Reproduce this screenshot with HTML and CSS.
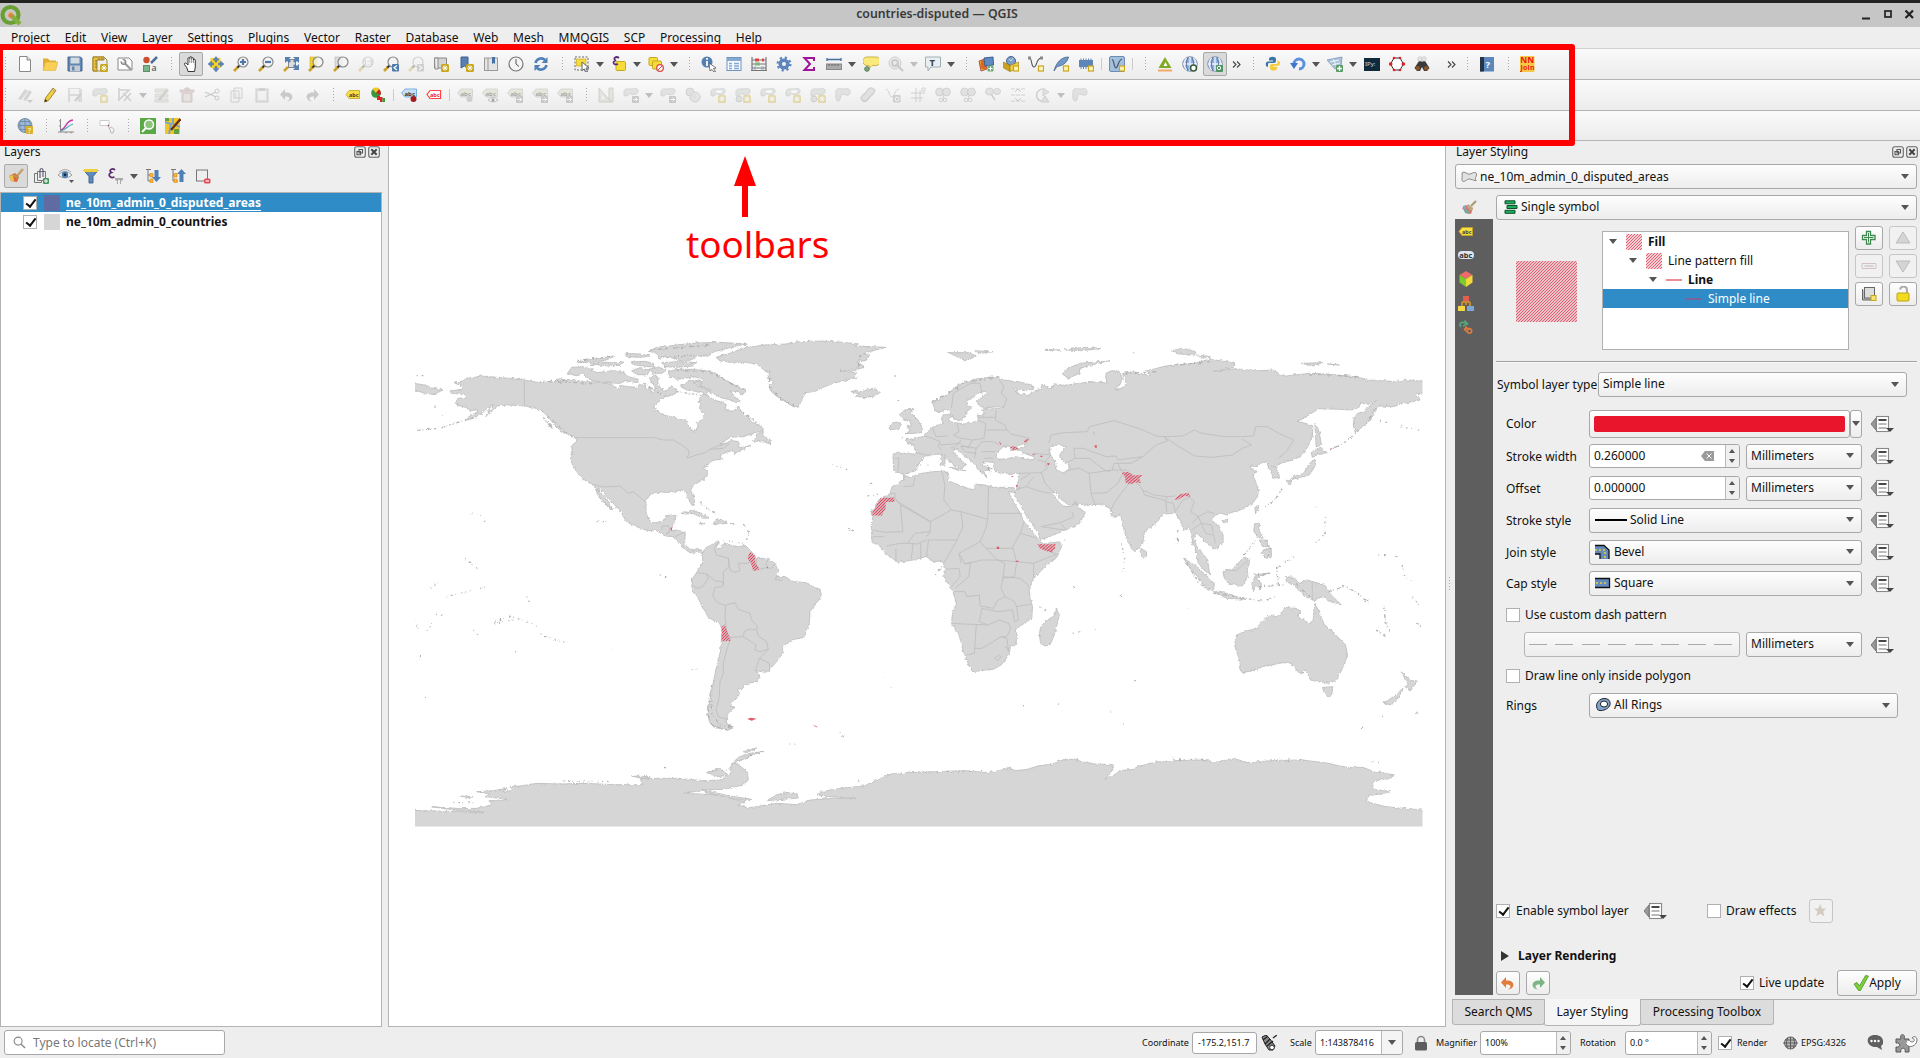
FILE: index.html
```html
<!DOCTYPE html>
<html lang="en">
<head>
<meta charset="utf-8">
<title>countries-disputed — QGIS</title>
<link rel="stylesheet" href="styles.css">
</head>
<body>
<svg class="defs" aria-hidden="true">
<defs>
<filter id="coast" x="-2%" y="-2%" width="104%" height="104%" color-interpolation-filters="sRGB"><feTurbulence type="fractalNoise" baseFrequency=".3" numOctaves="2" seed="4"/><feDisplacementMap in="SourceGraphic" scale="3.500" xChannelSelector="R" yChannelSelector="G"/></filter>
<clipPath id="extent"><rect x="415" y="330" width="1007.500" height="496.500"/></clipPath>
<pattern id="hatch" width="3" height="3" patternUnits="userSpaceOnUse"><path d="M-1 1L1-1M0 3L3 0M2 4L4 2" stroke="#e15a6c" stroke-width="1.15"/></pattern>
<pattern id="hatchA" width="9" height="9" patternUnits="userSpaceOnUse"><path d="M-2 2L2-2M0 9L9 0M7 11L11 7" stroke="#e0435a" stroke-width="3.4"/></pattern>
<symbol id="caret" viewBox="0 0 8 5"><path d="M0 0H8L4 5Z" fill="#555"/></symbol>
<symbol id="star" viewBox="0 0 8 8"><rect width="8" height="8" rx="1.500" fill="#c9a71c"/><path d="M4 1.200V6.800M1.200 4H6.800M2 2L6 6M6 2L2 6" stroke="#fff" stroke-width=".9"/></symbol>
<symbol id="lens" viewBox="0 0 16 16"><path d="M1 15L5.500 10.500" stroke="#c9a227" stroke-width="2.600"/><path d="M4.500 11.500L6.500 9.500" stroke="#333" stroke-width="2"/><circle cx="10" cy="6" r="5" fill="#f4f4f4" fill-opacity=".8" stroke="#888" stroke-width="1.200"/></symbol>
<symbol id="blob" viewBox="0 0 16 16"><path d="M1 5C1 1 5 2 8 2S15 0 15 4 11 8 8 7 6 9 3 9 1 7 1 5Z" fill="#b9beb9" stroke="#8c918c"/></symbol>
<symbol id="new" viewBox="0 0 16 16"><path d="M2.500.5H10L13.500 4V15.500H2.500Z" fill="#fff" stroke="#888"/><path d="M10 .5V4H13.500" fill="#ddd" stroke="#888"/></symbol>
<symbol id="open" viewBox="0 0 16 16"><path d="M1 14V2.500H6L7.500 4.500H14V7" fill="#e0ad2e"/><path d="M1 14.500L3.500 6H16L13.500 14.500Z" fill="#f9cf57" stroke="#e3b13a" stroke-width=".6"/></symbol>
<symbol id="save" viewBox="0 0 16 16"><path d="M1 1H13.500L15 2.500V15H1Z" fill="#5f86b5" stroke="#48668c"/><rect x="3.500" y="1.500" width="9" height="6" fill="#d5dbe2"/><rect x="3" y="9.500" width="10" height="5.500" fill="#c5cbd1"/><rect x="5" y="10.500" width="2.500" height="4" fill="#5f86b5"/></symbol>
<symbol id="layout" viewBox="0 0 16 16"><path d="M1 1H12L15 4V15H1Z" fill="#eee" stroke="#9a8a4a"/><path d="M1 1H12V4H5V15H1Z" fill="#e9bf3b" stroke="#a2832b"/><path d="M3 5H5M3 8H5M3 11H5M7 2V4M10 2V4" stroke="#775"/><use href="#star" x="8" y="8" width="8" height="8"/></symbol>
<symbol id="layouts" viewBox="0 0 16 16"><path d="M1 2H12L15 5V14H1Z" fill="#fff" stroke="#888"/><path d="M7 6.500L14 13.500" stroke="#999" stroke-width="2.200"/><circle cx="6.500" cy="6" r="2.500" fill="#bbb" stroke="#777"/><path d="M4 3.500L6.500 6" stroke="#fff" stroke-width="2"/></symbol>
<symbol id="style" viewBox="0 0 16 16"><circle cx="4.500" cy="4" r="3.200" fill="#c94f2f"/><path d="M9 7L15 1" stroke="#4a6f9c" stroke-width="2.500"/><rect x="1.500" y="9.500" width="6" height="6" fill="#7cb38a" stroke="#5b9169"/><text x="9.500" y="15" font-size="9" fill="#444">a</text></symbol>
<symbol id="hand" viewBox="0 0 16 16"><path d="M5 15.500L4 12 1.500 8.500C1 7 2.500 6.500 3.500 7.500L5 9V2.500C5 1.300 6.800 1.300 6.800 2.500V1.500C6.800.3 8.700.3 8.700 1.500V2.500C8.700 1.300 10.500 1.500 10.500 2.500V4C10.500 3 12.300 3 12.300 4V11L11.500 15.500Z" fill="#fff" stroke="#222" stroke-width=".9"/><path d="M6.800 2.500V7M8.700 2.500V7M10.500 4V7" stroke="#444" stroke-width=".6"/></symbol>
<symbol id="pansel" viewBox="0 0 16 16"><rect x="2.500" y="2" width="10" height="10" fill="#f2d22f"/><g fill="#5e88b8" stroke="#41618a" stroke-width=".4"><path d="M8 .5L11 4H9V6H7V4H5ZM8 16L11 12.500H9V10.500H7V12.500H5ZM0 8L3.500 5V7H5.500V9H3.500V11ZM16 8L12.500 5V7H10.500V9H12.500V11Z"/></g></symbol>
<symbol id="zin" viewBox="0 0 16 16"><use href="#lens"/><path d="M10 3V9M7 6H13" stroke="#4f78ab" stroke-width="2.200"/></symbol>
<symbol id="zout" viewBox="0 0 16 16"><use href="#lens"/><path d="M7 6H13" stroke="#4f78ab" stroke-width="2.200"/></symbol>
<symbol id="zfull" viewBox="0 0 16 16"><path d="M1 15L5 11" stroke="#c9a227" stroke-width="2.500"/><rect x="5.500" y="3.500" width="7" height="8" fill="#ddd" stroke="#888"/><path d="M2 1H8L6 3 8 5 6 7 4 5 2 7ZM16 1H10L12 3 10 5 12 7 14 5 16 7ZM16 14H10L12 12 10 10 12 8 14 10 16 8Z" fill="#5580b0"/></symbol>
<symbol id="zsel" viewBox="0 0 16 16"><rect x="2" y="1" width="7" height="10" fill="#f2d22f" stroke="#c8a818" stroke-width=".5"/><use href="#lens"/></symbol>
<symbol id="zlay" viewBox="0 0 16 16"><rect x="2" y="1" width="7" height="10" fill="#ddd" stroke="#aaa" stroke-width=".5"/><use href="#lens"/></symbol>
<symbol id="znat" viewBox="0 0 16 16"><use href="#lens"/><text x="5.500" y="8.500" font-size="6.500" fill="#555">1:1</text></symbol>
<symbol id="zlast" viewBox="0 0 16 16"><use href="#lens"/><rect x="9" y="8" width="7" height="7.500" rx="1" fill="#507aac"/><path d="M14 9.500L11 11.700 14 14" stroke="#fff" fill="none" stroke-width="1.200"/></symbol>
<symbol id="znext" viewBox="0 0 16 16"><use href="#lens"/><rect x="9" y="8" width="7" height="7.500" rx="1" fill="#888"/><path d="M11 9.500L14 11.700 11 14" stroke="#fff" fill="none" stroke-width="1.200"/></symbol>
<symbol id="nmap" viewBox="0 0 16 16"><path d="M1.500 2H13.500V12H1.500Z" fill="#d5d5d5" stroke="#888"/><path d="M1.500 2H5V13H2Z" fill="#eee" stroke="#888"/><use href="#star" x="8" y="8" width="8" height="8"/></symbol>
<symbol id="nbook" viewBox="0 0 16 16"><path d="M3 1H10V13L6.500 10 3 12Z" fill="#5680b3" stroke="#3f6390"/><use href="#star" x="8" y="8" width="8" height="8"/></symbol>
<symbol id="book" viewBox="0 0 16 16"><rect x="1.500" y="2" width="13" height="12.500" fill="#e4e4e4" stroke="#999"/><path d="M5 2V14.500" stroke="#999"/><path d="M9 1H12V8L10.500 7 9 8Z" fill="#4772a8"/></symbol>
<symbol id="clock" viewBox="0 0 16 16"><circle cx="8" cy="8" r="7" fill="#f5f5f5" stroke="#777" stroke-width="1.200"/><path d="M8 3V8L11 10.500" stroke="#555" fill="none"/></symbol>
<symbol id="refresh" viewBox="0 0 16 16"><path d="M2.500 7A5.700 5.700 0 0 1 12 4M13.500 9A5.700 5.700 0 0 1 4 12" stroke="#4f80b8" stroke-width="2.600" fill="none"/><path d="M14.500 1V7H8.500ZM1.500 15V9H7.500Z" fill="#4f80b8"/></symbol>
<symbol id="sel" viewBox="0 0 16 16"><rect x="1" y="1" width="13" height="13" fill="none" stroke="#666" stroke-dasharray="2 1.500"/><path d="M2.500 3H12V10H2.500Z" fill="#f6dc3b" stroke="#c9a91c" stroke-width=".7"/><path d="M8 6L15 12 12 12 13.500 15.500 11.500 16 10.500 13 8 14.500Z" fill="#fff" stroke="#444" stroke-width=".8"/></symbol>
<symbol id="eps" viewBox="0 0 16 16"><rect x="5" y="5.500" width="9.500" height="9" rx="1" fill="#f6dc3b" stroke="#c9a91c"/><path d="M8 2C5-.5 1 3 5 4.500 1 5 2 10 7 8" fill="none" stroke="#5c2c70" stroke-width="1.700"/></symbol>
<symbol id="desel" viewBox="0 0 16 16"><rect x="1" y="1.500" width="8.500" height="8" rx="1" fill="#f6dc3b" stroke="#c9a91c"/><rect x="4.500" y="5" width="9" height="8" rx="1" fill="#f6dc3b" stroke="#c9a91c"/><circle cx="12" cy="12" r="3.300" fill="#fff" stroke="#d84a4a" stroke-width="1.300"/><path d="M9.700 14.300L14.300 9.700" stroke="#d84a4a"/></symbol>
<symbol id="ident" viewBox="0 0 16 16"><circle cx="6" cy="6" r="5.500" fill="#557fb3"/><path d="M6 2V3.700M6 5V10" stroke="#fff" stroke-width="1.800"/><path d="M8 7L15 12 12.500 12.500 14.500 15.500 13 16 11 13.500 9 15Z" fill="#fff" stroke="#555" stroke-width=".8"/></symbol>
<symbol id="table" viewBox="0 0 16 16"><rect x="1" y="1.500" width="14" height="13" fill="#f5f9fd" stroke="#6f94c0"/><path d="M1 2H15V5H1Z" fill="#86a9d1"/><path d="M3 7.500H6M3 10H6M3 12.500H6M8 7.500H13M8 10H13M8 12.500H13" stroke="#86a9d1" stroke-width="1.300"/></symbol>
<symbol id="abacus" viewBox="0 0 16 16"><path d="M1 1V15M15 15V1M1 4H15M1 8H15M1 12H15M0 14.500H16" stroke="#777" fill="none" stroke-width="1.200"/><path d="M4 4H8" stroke="#d44" stroke-width="3"/><path d="M11 4H13" stroke="#d44" stroke-width="3"/><path d="M4 8H9" stroke="#7b7" stroke-width="3"/><path d="M3 12H5M10 12H13" stroke="#9ab" stroke-width="3"/></symbol>
<symbol id="gear" viewBox="0 0 16 16"><circle cx="8" cy="8" r="6.300" fill="none" stroke="#5c86bb" stroke-width="2.400" stroke-dasharray="2.200 2.748"/><circle cx="8" cy="8" r="3.800" fill="none" stroke="#5c86bb" stroke-width="3.500"/></symbol>
<symbol id="sigma" viewBox="0 0 16 16"><path d="M13 5V2H3.500L9 8 3.500 14H13V11" fill="none" stroke="#a0129a" stroke-width="2"/></symbol>
<symbol id="ruler" viewBox="0 0 16 16"><path d="M1 3.500H15M1 2V5M15 2V5" stroke="#44709f" stroke-width="1.300"/><rect x=".5" y="8" width="15" height="5.500" fill="#aaa" stroke="#888"/><path d="M3 8V10M6 8V10M9 8V10M12 8V10" stroke="#666"/></symbol>
<symbol id="tip" viewBox="0 0 16 16"><path d="M4 1H13A3.500 3.500 0 0 1 13 9.500H9L6 12.500 6 9.500H4A3.500 3.500 0 0 1 4 1Z" fill="#f9ea7b" stroke="#c9b34a"/><circle cx="4" cy="13" r="2.300" fill="#7aa87c" stroke="#557c57"/></symbol>
<symbol id="loc" viewBox="0 0 16 16"><circle cx="7" cy="7" r="6" fill="#ddd" stroke="#777"/><circle cx="7" cy="7" r="3" fill="none" stroke="#777" stroke-width="2"/><path d="M8 8L15 15" stroke="#777" stroke-width="2"/></symbol>
<symbol id="txt" viewBox="0 0 16 16"><path d="M.5 1H15.500V11H6L3 15V11H.5Z" fill="#e9eef0" stroke="#9fb0b5"/><text x="4.500" y="9.500" font-size="9.500" font-weight="700" fill="#444" font-family="Liberation Serif,serif">T</text></symbol>
<symbol id="dsm" viewBox="0 0 16 16"><path d="M1 5L7 3 9 13 3 15Z" fill="#f2b51f" stroke="#a55"/><path d="M3 4H9L8 14 2 12Z" fill="#d8692b"/><path d="M6 2L15 1 15.500 9 7 10Z" fill="#5f8bc4" stroke="#3b5e8f"/><rect x="9.500" y="9.500" width="6" height="6" rx="1" fill="#6fae78"/><path d="M12.500 10.500V14.500M10.500 12.500H14.500" stroke="#fff"/></symbol>
<symbol id="gpkg" viewBox="0 0 16 16"><circle cx="8" cy="5" r="4.500" fill="#7c9fc8" stroke="#44648c"/><path d="M6 3L8 5 10 2" stroke="#cde" fill="none"/><path d="M.5 6L7 9.500V15.500L.5 12Z" fill="#caa21f" stroke="#99791a" stroke-width=".6"/><path d="M7 9.500L15.500 6V12L7 15.500Z" fill="#f0cf3f" stroke="#99791a" stroke-width=".6"/><use href="#nb"/></symbol>
<symbol id="nb" viewBox="0 0 16 16"><rect x="10.500" y="10" width="5" height="5" fill="#fff5b8" stroke="#caa51d" stroke-width="1.200"/></symbol>
<symbol id="shp" viewBox="0 0 16 16"><path d="M1.500 2C4 2 3 11 6 11S8 3 13 2" fill="none" stroke="#555" stroke-width="1.100"/><path d="M0 .5H3V3.500H0ZM12 .5H15V3.500H12Z" fill="#888"/><use href="#nb"/></symbol>
<symbol id="quill" viewBox="0 0 16 16"><path d="M1 15C3 7 8 1 15.500 1 14 8 8 10 4 10.500Z" fill="#7198c7" stroke="#44648c" stroke-width=".8"/><use href="#nb"/></symbol>
<symbol id="mem" viewBox="0 0 16 16"><rect x="1" y="4" width="14" height="7" fill="#5d86b8"/><path d="M3 2.500V13M5.500 2.500V13M8 2.500V13M10.500 2.500V13M13 2.500V13" stroke="#5d86b8"/><use href="#nb"/></symbol>
<symbol id="virt" viewBox="0 0 16 16"><rect x=".5" y=".5" width="15" height="15" rx="1.500" fill="#a3bfde" stroke="#6b8db5"/><path d="M3 4C5 3 5 12 7 12S9 4 13 3" fill="none" stroke="#456" stroke-width="1.200"/><use href="#nb"/></symbol>
<symbol id="grass" viewBox="0 0 16 16"><path d="M8 1L14.500 12H1.500Z" fill="#7faa22"/><path d="M8.500 6L10.500 10H6.500Z" fill="#fff"/><path d="M1 14.500H15" stroke="#f3a868" stroke-width="2"/></symbol>
<symbol id="globe" viewBox="0 0 16 16"><circle cx="8" cy="8" r="7.300" fill="#8db4df" stroke="#8a9aac"/><path d="M8 1V15M1 8H15M4.500 2C1.500 6 1.500 10 4.500 14M11.500 2C14.500 6 14.500 10 11.500 14" fill="none" stroke="#eef" stroke-width="1.300"/><path d="M6 1.500C4 6 4 10 6 14.500M10 1.500C12 6 12 10 10 14.500" fill="none" stroke="#457" stroke-width=".7"/></symbol>
<symbol id="gl1" viewBox="0 0 16 16"><use href="#globe"/><circle cx="11.500" cy="12" r="3" fill="#fff" stroke="#365c3a" stroke-width="1.600"/></symbol>
<symbol id="gl2" viewBox="0 0 16 16"><use href="#globe"/><rect x="9" y="9" width="7" height="7" rx="1" fill="#4f9360"/><circle cx="12" cy="12" r="1.700" fill="none" stroke="#fff"/></symbol>
<symbol id="py" viewBox="0 0 16 16"><path d="M4 7H8C11 7 11 6 11 3 11 0 4 0 4 3V4.500H8V5.500H3C0 5.500 0 11 3 11V9C3 7.500 3.500 7 4 7Z" fill="#3b75a8"/><path d="M11 8H8C5 8 5 9 5 12 5 15.500 12 15.500 12 12V10.800H8V9.800H13C16 9.500 15.500 4.500 12.500 4.500V6.500C12.500 7.500 12 8 11 8Z" fill="#f5cb3c"/></symbol>
<symbol id="rel" viewBox="0 0 16 16"><path d="M4 8A5 5 0 1 1 9 13" fill="none" stroke="#5a90de" stroke-width="3"/><path d="M0 7L4 13 8 7Z" fill="#3f76cb"/></symbol>
<symbol id="mesh" viewBox="0 0 16 16"><path d="M0 4L15 1 14 10 8 13Z" fill="#a9c2dc" stroke="#8ba4c0"/><path d="M3 6L12 4M5 9L13 7M6 3L10 11" stroke="#fff" stroke-width=".8"/><rect x="9" y="9" width="7" height="7" rx="1" fill="#5a9c66"/><path d="M12.500 10V15M10 12.500H15" stroke="#fff" stroke-width="1.400"/></symbol>
<symbol id="ipy" viewBox="0 0 16 16"><rect y="2" width="16" height="13" fill="#0f2a3a"/><text x="1" y="10" font-size="6" fill="#cde" font-family="Liberation Mono,monospace">IPy:</text></symbol>
<symbol id="hex" viewBox="0 0 16 16"><path d="M5 2H11L14.500 8 11 14H5L1.500 8Z" fill="#fff" stroke="#333"/><g fill="#e0202a"><circle cx="5" cy="2" r="1.300"/><circle cx="11" cy="2" r="1.300"/><circle cx="14.300" cy="8" r="1.800"/><circle cx="11" cy="14" r="1.300"/><circle cx="5" cy="14" r="1.300"/><circle cx="1.700" cy="8" r="1.800"/></g></symbol>
<symbol id="bino" viewBox="0 0 16 16"><path d="M5 5H7L8 6 9 5H11L15.500 12 13 15H10L8 11 6 15H3L.5 12Z" fill="#3a3a3a"/><circle cx="6" cy="3" r="2.300" fill="#e4e4e4" stroke="#bbb" stroke-width=".5"/><circle cx="10" cy="3" r="2.300" fill="#e4e4e4" stroke="#bbb" stroke-width=".5"/><circle cx="3.800" cy="12.200" r="2.200" fill="#8a5427"/><circle cx="12.200" cy="12.200" r="2.200" fill="#8a5427"/></symbol>
<symbol id="help" viewBox="0 0 16 16"><rect x="1" y="1" width="14" height="14.500" fill="#5b87bd"/><rect x="1" y="1" width="4" height="14.500" fill="#263545"/><text x="6.500" y="12" font-size="9.500" font-weight="700" fill="#fff" font-family="Liberation Serif,serif">?</text></symbol>
<symbol id="nnj" viewBox="0 0 16 16"><rect x="0" y="0" width="14.500" height="16" rx="1" fill="#f6c944"/><g font-weight="700" fill="#f01414"><text x=".3" y="7.300" font-size="8.500">NN</text><text x=".4" y="14" font-size="6.800" textLength="14">Join</text></g></symbol>
<symbol id="pencil" viewBox="0 0 16 16"><path d="M2.500 15L3.500 11 11 1 14 3.500 6.500 13.500Z" fill="#f0cf3f" stroke="#8c7223" stroke-width=".8"/><path d="M2.500 15L3.300 12 5.500 14Z" fill="#333"/><path d="M10 2.500L13 5" stroke="#b99"/></symbol>
<symbol id="pencils" viewBox="0 0 16 16"><path d="M1 12L8 2 11 4 4 13ZM6 13L12 3 15 5 9 14Z" fill="#999"/><path d="M10 13H16L13 16Z" fill="#777"/></symbol>
<symbol id="saved" viewBox="0 0 16 16"><path d="M1 1H13L15 3V15H1Z" fill="#aaa"/><path d="M3 2H12V7H3ZM3 9H11V15H3Z" fill="#eee"/><path d="M8 14L14 7" stroke="#888" stroke-width="2"/></symbol>
<symbol id="addp" viewBox="0 0 16 16"><use href="#blob"/><use href="#star" x="8" y="8" width="8" height="8"/></symbol>
<symbol id="vert" viewBox="0 0 16 16"><path d="M2 1V14M2 3H12L3 12M6 6L14 14M14 6L7 14" stroke="#888" fill="none" stroke-width="1.600"/></symbol>
<symbol id="multi" viewBox="0 0 16 16"><path d="M1 2H14V5H1ZM1 7H14V10H1ZM1 12H14V15H1Z" fill="#c4c4b0" stroke="#aaa"/><path d="M5 13L13 3" stroke="#888" stroke-width="2.500"/></symbol>
<symbol id="trash" viewBox="0 0 16 16"><path d="M1 3H15V5H1ZM6 1H10V3H6ZM3 6H13V15H3Z" fill="#b89898" stroke="#977"/><path d="M6 7V14M8 7V14M10 7V14" stroke="#eee"/></symbol>
<symbol id="cut" viewBox="0 0 16 16"><path d="M1 5L12 10M1 10L12 5" stroke="#777" stroke-width="1.300"/><circle cx="13" cy="4" r="2" fill="none" stroke="#777"/><circle cx="13" cy="11" r="2" fill="none" stroke="#777"/></symbol>
<symbol id="copy" viewBox="0 0 16 16"><path d="M5 1H13V11H5ZM2 4H10V15H2Z" fill="#eee" stroke="#888"/><path d="M4 7H8M4 9H8M4 11H8" stroke="#aaa"/></symbol>
<symbol id="paste" viewBox="0 0 16 16"><rect x="2" y="2" width="12" height="13" fill="#bbb" stroke="#888"/><path d="M4 4H12V13H4Z" fill="#eee"/><path d="M5 1H11V4H5Z" fill="#888"/></symbol>
<symbol id="undo" viewBox="0 0 16 16"><path d="M6 2V5.500C16 5 15 14 8 14.500 12 12 11 9 6 9.500V13L1 7.500Z" fill="currentColor"/></symbol>
<symbol id="redo" viewBox="0 0 16 16"><path d="M10 2V5.500C0 5 1 14 8 14.500 4 12 5 9 10 9.500V13L15 7.500Z" fill="currentColor"/></symbol>
<symbol id="lab" viewBox="0 0 16 16"><path d="M4 3.500H14.500V11.500H4L1 7.500Z" fill="#f7df45" stroke="#c4a51f" stroke-width=".8"/><text x="4" y="9.700" font-size="5.500" font-weight="700" fill="#443">abc</text></symbol>
<symbol id="diag" viewBox="0 0 16 16"><circle cx="6" cy="6" r="4.800" fill="#37983e"/><path d="M6 6L2.500 2A5 5 0 0 1 9.500 2Z" fill="#f2c522"/><path d="M6 6L9 2.500A5 5 0 0 1 10.500 8Z" fill="#c22"/><path d="M7 9H10V13H7ZM10 10H12.500V15H10Z" fill="#d22"/><path d="M12.500 11H15V15H12.500Z" fill="#399c3e"/></symbol>
<symbol id="labb" viewBox="0 0 16 16"><path d="M4 2H15.500V10H4L.5 6Z" fill="#c6dff8" stroke="#7eaee0"/><text x="3.500" y="8.500" font-size="6" font-weight="700" fill="#333">abc</text><circle cx="12.500" cy="12" r="3" fill="#a31c1c"/></symbol>
<symbol id="labr" viewBox="0 0 16 16"><path d="M4 3.500H14.500V11.500H4L1 7.500Z" fill="#fff" stroke="#f44" stroke-width="1.200"/><text x="4" y="9.700" font-size="5.500" font-weight="700" fill="#e22">abc</text></symbol>
<symbol id="labx" viewBox="0 0 16 16"><path d="M4 2H15.500V10H4L.5 6Z" fill="#c8c8a8" stroke="#999"/><text x="3.500" y="8.500" font-size="6" font-weight="700">abc</text><circle cx="12.500" cy="12" r="3" fill="#888"/></symbol>
<symbol id="labe" viewBox="0 0 16 16"><path d="M4 2H15.500V10H4L.5 6Z" fill="#c8c8a8" stroke="#999"/><text x="3.500" y="8.500" font-size="6" font-weight="700">abc</text><path d="M6 13Q11 8 16 13Q11 17 6 13" fill="#fff" stroke="#555"/><circle cx="11" cy="13" r="1.500"/></symbol>
<symbol id="labm" viewBox="0 0 16 16"><path d="M4 2H15.500V10H4L.5 6Z" fill="#c8c8a8" stroke="#999"/><text x="3.500" y="8.500" font-size="6" font-weight="700">abc</text><rect x="9" y="9" width="7" height="7" rx="1" fill="#777"/><path d="M10 12.500H14.500M12.500 10.500L14.500 12.500 12.500 14.500" stroke="#fff" fill="none"/></symbol>
<symbol id="tri" viewBox="0 0 16 16"><path d="M1 1L13 15H1ZM11 1H15V15H13L11 12Z" fill="#ccc5be" stroke="#887"/><path d="M4 9L7 12H4Z" fill="#fff"/></symbol>
<symbol id="bm" viewBox="0 0 16 16"><use href="#blob"/><rect x="9" y="9" width="7" height="7" rx="1" fill="#777"/><path d="M10 12.500H14.500M12.500 10.500L14.500 12.500 12.500 14.500" stroke="#fff" fill="none"/></symbol>
<symbol id="circ" viewBox="0 0 16 16"><circle cx="5" cy="5" r="4" fill="#bbb" stroke="#888"/><circle cx="10" cy="10" r="5" fill="#ccc" stroke="#888"/><circle cx="9" cy="9" r="1.500" fill="#eee" stroke="#999"/></symbol>
<symbol id="ringa" viewBox="0 0 16 16"><use href="#blob"/><ellipse cx="9" cy="4.500" rx="3" ry="1.500" fill="#fff"/><use href="#star" x="8" y="8" width="8" height="8"/></symbol>
<symbol id="part" viewBox="0 0 16 16"><use href="#blob"/><circle cx="4" cy="12" r="3" fill="#b9beb9" stroke="#888"/><use href="#star" x="8" y="8" width="8" height="8"/></symbol>
<symbol id="resh" viewBox="0 0 16 16"><path d="M1 5C1 0 5 2 8 2S15 0 15 5 11 8 8 7 6 15 3 14 1 8 1 5Z" fill="#b9beb9" stroke="#8c918c"/></symbol>
<symbol id="offs" viewBox="0 0 16 16"><path d="M2 13C-1 9 5 8 7 4S13 0 14.500 3 11 8 9 11 4 16 2 13Z" fill="#b9beb9" stroke="#888" stroke-width="1.400"/></symbol>
<symbol id="vv" viewBox="0 0 16 16"><path d="M1 2C4 2 4 10 7 10S9 3 14 2" fill="none" stroke="#888"/><rect x="8" y="8" width="7.500" height="7.500" rx="1" fill="#888"/><circle cx="12" cy="12" r="2" fill="none" stroke="#fff"/></symbol>
<symbol id="trim" viewBox="0 0 16 16"><path d="M6 1V15M10 3V15M1 6H15M1 11H13" stroke="#888"/><path d="M12 1H15V4H12Z" fill="#fff" stroke="#888"/></symbol>
<symbol id="split" viewBox="0 0 16 16"><ellipse cx="4.500" cy="5" rx="3.800" ry="4" fill="#b9beb9" stroke="#888"/><ellipse cx="11.500" cy="5" rx="3.800" ry="4" fill="#b9beb9" stroke="#888"/><path d="M7 4L9 12" stroke="#888"/><circle cx="6" cy="13" r="1.800" fill="none" stroke="#888"/><circle cx="10" cy="13" r="1.800" fill="none" stroke="#888"/></symbol>
<symbol id="merge" viewBox="0 0 16 16"><ellipse cx="4.500" cy="4.500" rx="4" ry="3.500" fill="#b9beb9" stroke="#888"/><ellipse cx="12" cy="4.500" rx="3.500" ry="3" fill="#b9beb9" stroke="#888"/><path d="M6 7L10 13" stroke="#888" stroke-width="1.500"/></symbol>
<symbol id="grid" viewBox="0 0 16 16"><path d="M1 2H15M1 8H15M1 14H15" stroke="#888" stroke-dasharray="4 1"/><path d="M5 5L8 2 11 5M5 11L8 14 11 11" fill="none" stroke="#777"/></symbol>
<symbol id="rot" viewBox="0 0 16 16"><path d="M7 2C0 4 0 12 6 14" fill="none" stroke="#888" stroke-width="1.500"/><path d="M8 1L14 5 8 9ZM6 15L10 9 14 15Z" fill="#bbb" stroke="#888"/></symbol>
<symbol id="qgl" viewBox="0 0 16 16"><circle cx="8" cy="7.500" r="7" fill="#9db9d8" stroke="#7d90a8"/><path d="M8 .5V14.500M1 7.500H15M2.500 3.500H13.500M2.500 11.500H13.500M5 1C2 5 2 10 5 14M11 1C14 5 14 10 11 14" fill="none" stroke="#6f88a6" stroke-width=".9"/><rect x="9" y="8" width="7" height="8" rx="1" fill="#dcb128"/><text x="11" y="14.500" font-size="7" fill="#fff">?</text></symbol>
<symbol id="plot" viewBox="0 0 16 16"><path d="M2.500 1V14M0 14H16M1 3H2.500M1 8H2.500M8 14V15.500M13 14V15.500" fill="none" stroke="#888"/><path d="M3 12C9 10 7 3 15 2" fill="none" stroke="#c239a3" stroke-width="1.400"/><path d="M3 13C9 11 9 8 15 6" fill="none" stroke="#5ab" stroke-width="1.200"/></symbol>
<symbol id="selh" viewBox="0 0 16 16"><path d="M1 2.500H10V7.500H1Z" fill="#fff" stroke="#ccc"/><path d="M9 7L10.500 11M10.500 10L12.500 9 15 11.500 14 15H12Z" stroke="#aaa" fill="#f4f4f4" stroke-width=".8"/><circle cx="9.500" cy="7.500" r=".8" fill="#a44"/></symbol>
<symbol id="qms" viewBox="0 0 16 16"><rect width="16" height="16" fill="#5aa746"/><circle cx="9" cy="6.500" r="4.500" fill="#8cc47c" stroke="#fff" stroke-width="1.500"/><path d="M2 14L6 10" stroke="#fff" stroke-width="2"/></symbol>
<symbol id="osm" viewBox="0 0 16 16"><rect width="15" height="16" fill="#f0c52c"/><path d="M0 4L6 6 4 16M8 0V6L15 9" stroke="#6fa3cf" fill="none" stroke-width="1.800"/><path d="M0 0H4V3H0ZM9 11H14V16H9Z" fill="#62a03c"/><path d="M6 12L15.500 1" stroke="#6a2d13" stroke-width="2.300"/></symbol>
<symbol id="brush" viewBox="0 0 16 16"><path d="M15 1L9 8" stroke="#c3a470" stroke-width="2.500"/><path d="M1 8L7 5 11 9 9 14 3 13Z" fill="#d9693a"/><path d="M1 8L5 7 6 13 3 13Z" fill="#e8c44c"/><path d="M6 6L11 9 10 11 5 8Z" fill="#b8955a"/></symbol>
<symbol id="brush2" viewBox="0 0 16 16"><path d="M15 1L10 6" stroke="#a89a6d" stroke-width="2"/><path d="M1 8L6 5 12 8 10 14 5 13Z" fill="#d8776c"/><path d="M3 10L7 9 8 14 4 13Z" fill="#6fae9a"/><path d="M2 6L5 5 5 9 2 10Z" fill="#79a7d8"/><path d="M7 4L12 8 10 11 6 7Z" fill="#b8aa80"/></symbol>
<symbol id="addg" viewBox="0 0 16 16"><path d="M1.500 5.500H8.500V14.500H1.500Z" fill="#eee" stroke="#777"/><path d="M4.500 12.500V3.500H12.500V12.500Z" fill="#eee" stroke="#777"/><path d="M7 10V2A1.500 1.500 0 0 1 10 2V9" stroke="#446" fill="none"/><rect x="10" y="10" width="6" height="6" rx="1" fill="#4b9460"/><path d="M13 11V15M11 13H15" stroke="#fff"/></symbol>
<symbol id="eye" viewBox="0 0 16 16"><path d="M0 7Q7 0 14 7 7 13 0 7Z" fill="#f4f4f4" stroke="#888" stroke-width=".8"/><circle cx="7" cy="6.800" r="3.200" fill="#4d80b5"/><circle cx="7" cy="6.800" r="1.300" fill="#123"/><path d="M1 4Q7-1 13 4" fill="none" stroke="#aaa"/><path d="M11 12H16L13.500 15Z" fill="#555"/></symbol>
<symbol id="funnel" viewBox="0 0 16 16"><path d="M1 2.500H15L10 8.500V15H6V8.500Z" fill="#5d8abd" stroke="#44698f"/><path d="M1 1H15V4H1Z" fill="#f0cf3f"/></symbol>
<symbol id="epsf" viewBox="0 0 16 16"><path d="M7 2C4-.5 0 2.500 3.500 4.500-.5 5.500 1 11 6.500 9" fill="none" stroke="#5c2c70" stroke-width="1.700"/><path d="M7 10H15V12L13 13V16H12V12H10V16H9V13L7 12Z" fill="#aaa"/></symbol>
<symbol id="expand" viewBox="0 0 16 16"><path d="M1 1.500H6M3 1.500V13H8M3 7H7" stroke="#777" fill="none"/><path d="M5 5.500H8V9H5ZM5 11H8V14.500H5Z" fill="#fbb73c" stroke="#d58a1c" stroke-width=".6"/><path d="M9.500 2H13.500V9H16L11.500 14 7 9H9.500Z" fill="#4f7fb3"/></symbol>
<symbol id="coll" viewBox="0 0 16 16"><path d="M1 1.500H6M3 1.500V13H8M3 7H7" stroke="#777" fill="none"/><path d="M4 5.500H7V9H4ZM4 11H7V14.500H4Z" fill="#fbb73c" stroke="#d58a1c" stroke-width=".6"/><path d="M9.500 14H13.500V6H16L11.500 1 7 6H9.500Z" fill="#4f7fb3"/></symbol>
<symbol id="rem" viewBox="0 0 16 16"><rect x="1.500" y="2" width="11" height="11" fill="#eee" stroke="#777"/><rect x="9" y="10.500" width="6.500" height="5" rx="1.500" fill="#e14b57"/><path d="M10.500 13H14" stroke="#fff" stroke-width="1.200"/></symbol>
<symbol id="float" viewBox="0 0 12 12"><rect x=".7" y=".7" width="10.600" height="10.600" rx="2" fill="#eee" stroke="#666" stroke-width="1.100"/><path d="M5 3.500H8.500V7H5ZM3 5.500H6.500V8.800H3Z" fill="#eee" stroke="#555" stroke-width="1.100"/></symbol>
<symbol id="close" viewBox="0 0 12 12"><rect x=".7" y=".7" width="10.600" height="10.600" rx="2" fill="#eee" stroke="#666" stroke-width="1.100"/><path d="M3.300 3.300L8.700 8.700M8.700 3.300L3.300 8.700" stroke="#444" stroke-width="2"/></symbol>
<symbol id="dd" viewBox="0 0 24 18"><path d="M0 9L5 3V15Z" fill="#999" stroke="#777"/><rect x="5.500" y="1.500" width="12" height="15" fill="#fff" stroke="#888" stroke-width="1.100"/><path d="M7.500 5H15.500" stroke="#333" stroke-width="1.800"/><path d="M7.500 9H15.500M7.500 13H15.500" stroke="#777" stroke-width="1.100"/><path d="M15 13H23L19 17Z" fill="#444"/></symbol>
</defs>
</svg>

<div class="desk"></div>
<header class="title">
  <svg class="logo" viewBox="0 0 22 22"><circle cx="10.500" cy="11" r="8" fill="none" stroke="#6aa033" stroke-width="4.200"/><path d="M11 11L20 20" stroke="#7fb13c" stroke-width="4.500"/><path d="M8.500 8.500H13L11 12Z" fill="#f0a03c"/><circle cx="10.500" cy="11.500" r="2.200" fill="#ee7b33"/></svg>
  <span class="name">countries-disputed — QGIS</span>
  <svg class="winbtns" viewBox="0 0 60 14"><path d="M2 11.500H10" stroke="#222" stroke-width="2"/><rect x="25" y="4" width="6" height="6" fill="none" stroke="#222" stroke-width="1.700"/><path d="M45.500 3.500L53 11M53 3.500L45.500 11" stroke="#222" stroke-width="2.200"/></svg>
</header>
<nav class="menu"><span>Project</span><span>Edit</span><span>View</span><span>Layer</span><span>Settings</span><span>Plugins</span><span>Vector</span><span>Raster</span><span>Database</span><span>Web</span><span>Mesh</span><span>MMQGIS</span><span>SCP</span><span>Processing</span><span>Help</span></nav>

<div class="bar top">
<i class="h first"></i>
<svg class="i"><use href="#new"/></svg><svg class="i"><use href="#open"/></svg><svg class="i"><use href="#save"/></svg><svg class="i"><use href="#layout"/></svg><svg class="i"><use href="#layouts"/></svg><svg class="i"><use href="#style"/></svg>
<i class="h"></i>
<svg class="i on"><use href="#hand"/></svg><svg class="i"><use href="#pansel"/></svg><svg class="i"><use href="#zin"/></svg><svg class="i"><use href="#zout"/></svg><svg class="i"><use href="#zfull"/></svg><svg class="i"><use href="#zsel"/></svg><svg class="i"><use href="#zlay"/></svg><svg class="i off"><use href="#znat"/></svg><svg class="i"><use href="#zlast"/></svg><svg class="i off"><use href="#znext"/></svg><svg class="i"><use href="#nmap"/></svg><svg class="i"><use href="#nbook"/></svg><svg class="i"><use href="#book"/></svg><svg class="i"><use href="#clock"/></svg><svg class="i"><use href="#refresh"/></svg>
<i class="h"></i>
<svg class="i"><use href="#sel"/></svg><svg class="a"><use href="#caret"/></svg><svg class="i"><use href="#eps"/></svg><svg class="a"><use href="#caret"/></svg><svg class="i"><use href="#desel"/></svg><svg class="a"><use href="#caret"/></svg>
<i class="h"></i>
<svg class="i"><use href="#ident"/></svg><svg class="i"><use href="#table"/></svg><svg class="i"><use href="#abacus"/></svg><svg class="i"><use href="#gear"/></svg><svg class="i"><use href="#sigma"/></svg><svg class="i"><use href="#ruler"/></svg><svg class="a"><use href="#caret"/></svg><svg class="i"><use href="#tip"/></svg><svg class="i off"><use href="#loc"/></svg><svg class="a off"><use href="#caret"/></svg><svg class="i"><use href="#txt"/></svg><svg class="a"><use href="#caret"/></svg>
<i class="h"></i>
<svg class="i"><use href="#dsm"/></svg><svg class="i"><use href="#gpkg"/></svg><svg class="i"><use href="#shp"/></svg><svg class="i"><use href="#quill"/></svg><svg class="i"><use href="#mem"/></svg><i class="s"></i><svg class="i"><use href="#virt"/></svg><i class="s"></i>
<i class="h"></i>
<svg class="i"><use href="#grass"/></svg><svg class="i"><use href="#gl1"/></svg><svg class="i on"><use href="#gl2"/></svg><svg class="ext" viewBox="0 0 9 7"><path d="M1 .5L4 3.500 1 6.500M5 .5L8 3.500 5 6.500"/></svg>
<i class="h"></i>
<svg class="i"><use href="#py"/></svg><svg class="i"><use href="#rel"/></svg><svg class="a"><use href="#caret"/></svg><svg class="i"><use href="#mesh"/></svg><svg class="a"><use href="#caret"/></svg><svg class="i"><use href="#ipy"/></svg><svg class="i"><use href="#hex"/></svg><svg class="i"><use href="#bino"/></svg><svg class="ext wide" viewBox="0 0 9 7"><path d="M1 .5L4 3.500 1 6.500M5 .5L8 3.500 5 6.500"/></svg>
<i class="h"></i><svg class="i"><use href="#help"/></svg><i class="h"></i><svg class="i"><use href="#nnj"/></svg>
</div>
<div class="bar">
<i class="h first"></i>
<svg class="i off"><use href="#pencils"/></svg><svg class="i"><use href="#pencil"/></svg><svg class="i off"><use href="#saved"/></svg><svg class="i off"><use href="#addp"/></svg><svg class="i off"><use href="#vert"/></svg><svg class="a off"><use href="#caret"/></svg><svg class="i off"><use href="#multi"/></svg><svg class="i off"><use href="#trash"/></svg><svg class="i off"><use href="#cut"/></svg><svg class="i off"><use href="#copy"/></svg><svg class="i off"><use href="#paste"/></svg><svg class="i off"><use href="#undo"/></svg><svg class="i off"><use href="#redo"/></svg>
<i class="h"></i>
<svg class="i"><use href="#lab"/></svg><svg class="i"><use href="#diag"/></svg><i class="s"></i><svg class="i"><use href="#labb"/></svg><svg class="i"><use href="#labr"/></svg><i class="s"></i><svg class="i off"><use href="#labx"/></svg><svg class="i off"><use href="#labe"/></svg><svg class="i off"><use href="#labm"/></svg><svg class="i off"><use href="#labm"/></svg><svg class="i off"><use href="#labm"/></svg>
<i class="h"></i>
<svg class="i off"><use href="#tri"/></svg><svg class="i off"><use href="#bm"/></svg><svg class="a off"><use href="#caret"/></svg><svg class="i off"><use href="#bm"/></svg><svg class="i off"><use href="#circ"/></svg><svg class="i off"><use href="#ringa"/></svg><svg class="i off"><use href="#part"/></svg><svg class="i off"><use href="#ringa"/></svg><svg class="i off"><use href="#ringa"/></svg><svg class="i off"><use href="#part"/></svg><svg class="i off"><use href="#resh"/></svg><svg class="i off"><use href="#offs"/></svg><svg class="i off"><use href="#vv"/></svg><svg class="i off"><use href="#trim"/></svg><svg class="i off"><use href="#split"/></svg><svg class="i off"><use href="#split"/></svg><svg class="i off"><use href="#merge"/></svg><svg class="i off"><use href="#grid"/></svg><svg class="i off"><use href="#rot"/></svg><svg class="a off"><use href="#caret"/></svg><svg class="i off"><use href="#resh"/></svg>
</div>
<div class="bar last">
<i class="h first"></i><svg class="i"><use href="#qgl"/></svg><i class="h"></i><svg class="i"><use href="#plot"/></svg><i class="h"></i><svg class="i"><use href="#selh"/></svg><i class="h"></i><svg class="i"><use href="#qms"/></svg><svg class="i"><use href="#osm"/></svg>
</div>

<main class="work">
<section class="layers">
  <div class="dockhead"><span>Layers</span><svg><use href="#float"/></svg><svg><use href="#close"/></svg></div>
  <div class="ltools"><svg class="i on"><use href="#brush"/></svg><svg class="i"><use href="#addg"/></svg><svg class="i"><use href="#eye"/></svg><svg class="i"><use href="#funnel"/></svg><svg class="i"><use href="#epsf"/></svg><svg class="a"><use href="#caret"/></svg><svg class="i"><use href="#expand"/></svg><svg class="i"><use href="#coll"/></svg><svg class="i"><use href="#rem"/></svg></div>
  <div class="ltree">
    <div class="lrow cur"><i class="cb ck"></i><i class="sw hat"></i><span>ne_10m_admin_0_disputed_areas</span></div>
    <div class="lrow"><i class="cb ck"></i><i class="sw"></i><span>ne_10m_admin_0_countries</span></div>
  </div>
</section>

<section class="canvas">
<svg class="map" viewBox="389 142 1057 884">
<g filter="url(#coast)" clip-path="url(#extent)">
<g class="land" transform="translate(410 330) scale(.33333)">
<path d="M132 158L150 157 160 152 172 143 190 143 215 137 228 139 260 142 300 145 343 150 372 155 388 158 400 153 430 156 440 148 452 146 470 153 480 148 500 152 540 155 575 158 600 162 612 168 625 178 630 166 655 170 680 172 690 162 705 168 715 178 718 168 725 190 735 185 735 170 720 150 728 138 738 136 745 145 742 160 755 178 770 182 785 168 800 178 798 190 780 197 765 200 745 215 732 228 735 240 755 250 765 256 790 262 815 268 832 271 836 290 850 304 862 298 865 288 858 278 880 268 882 252 872 240 868 215 872 195 885 193 905 205 920 212 940 218 950 225 945 232 950 242 970 243 980 235 985 228 1000 248 1012 262 1018 268 1025 275 1045 285 1058 292 1060 300 1040 308 1015 315 1000 320 960 322 945 332 930 345 950 340 962 330 985 335 990 345 985 352 1000 352 1022 346 990 362 975 370 970 362 945 368 930 378 938 388 915 390 900 398 888 402 895 408 882 412 892 425 892 435 885 445 860 460 845 472 843 482 853 505 853 522 846 526 840 515 832 500 828 485 815 480 800 483 780 487 760 487 740 487 720 495 708 510 708 545 715 568 730 580 750 575 762 572 768 558 780 554 798 556 795 575 785 590 783 602 800 600 820 605 826 612 824 635 825 645 840 657 850 662 860 655 870 658 878 668 878 675 865 663 858 665 850 672 840 668 820 655 808 643 803 632 790 620 765 618 745 605 735 600 720 602 700 598 675 588 650 575 640 560 635 548 615 525 595 505 575 480 565 470 570 485 585 505 600 525 607 540 600 538 585 520 565 500 560 480 548 465 540 458 520 450 500 425 487 405 483 385 487 365 485 350 490 342 500 335 500 325 480 315 455 305 430 280 410 255 390 238 370 232 343 228 310 226 290 225 262 228 247 244 235 250 228 260 240 238 250 225 235 232 215 250 190 265 162 272 182 256 205 244 200 240 180 242 172 232 150 228 135 218 145 205 170 203 160 193 125 190 120 183 155 178 165 170 148 165Z"/>
<path d="M1030 333L1048 308 1060 303 1058 318 1080 328 1082 342 1060 336ZM8 158L45 166 65 174 98 180 72 194 45 190 20 182 8 188ZM472 130L485 112 520 110 550 120 560 128 610 122 642 128 655 140 685 148 680 158 645 152 630 160 580 158 550 152 530 145 520 132 500 137ZM775 125L800 118 850 118 900 124 920 135 950 155 985 170 1008 180 1000 192 980 185 960 182 975 200 990 215 980 218 955 208 930 203 905 190 885 178 860 165 850 155 880 155 875 145 850 140 825 145 800 148 780 140ZM718 64L740 52 800 45 860 39 930 37 1012 42 980 48 940 58 912 65 895 78 860 78 845 90 810 92 780 80 745 80 735 68ZM755 98L800 95 860 98 850 108 800 112 765 110ZM665 122L690 113 718 120 712 135 680 134ZM500 98L535 90 580 84 610 80 590 90 545 97ZM540 103L570 96 610 98 640 96 632 106 590 108 560 104ZM645 70L690 72 720 78 690 82 650 80ZM665 96L705 94 730 100 735 112 700 108 672 104ZM715 118L745 112 768 118 760 128 730 132ZM835 152L870 150 872 168 905 180 890 192 860 185 830 180 812 170ZM918 82L960 70 1000 55 1060 45 1130 42 1160 36 1230 33 1300 37 1345 42 1335 48 1428 52 1380 64 1360 72 1378 76 1370 90 1340 98 1362 110 1340 120 1290 122 1340 128 1330 142 1345 142 1310 150 1270 160 1240 172 1215 184 1185 188 1165 232 1150 230 1125 215 1095 195 1080 180 1078 165 1092 155 1072 145 1080 132 1062 120 1045 105 1010 97 960 97 930 92ZM1322 185L1340 180 1345 187 1370 180 1398 177 1412 186 1395 198 1365 203 1338 198 1348 192ZM815 550L845 541 870 548 900 564 880 565 850 551 825 552ZM910 580L918 568 940 573 952 580 930 583ZM868 580L885 580 880 585ZM960 580L975 581 970 585Z"/>
<path d="M878 675L880 662 895 650 912 640 925 632 928 640 918 650 925 657 930 650 945 640 960 645 985 650 1005 646 1015 655 1025 665 1040 685 1075 685 1095 700 1105 725 1098 740 1125 740 1150 755 1190 758 1210 770 1230 778 1234 800 1215 825 1200 845 1198 880 1180 922 1145 930 1118 948 1118 970 1100 995 1080 1018 1068 1027 1038 1022 1050 1042 1040 1055 1005 1062 1002 1075 982 1078 990 1092 975 1110 962 1117 963 1128 973 1132 955 1150 948 1165 950 1180 972 1192 955 1200 925 1195 900 1180 892 1150 900 1110 908 1065 920 1010 932 960 936 900 930 882 895 862 880 835 862 800 845 782 848 745 865 720 877 700Z"/>
<path d="M1500 1326L1470 1332 1450 1330 1420 1342 1400 1350 1370 1367 1300 1374 1240 1384 1220 1394 1255 1400 1335 1405 1270 1405 1200 1410 1160 1424 1100 1420 1015 1434 985 1425 1005 1415 960 1405 920 1395 870 1392 825 1390 880 1380 940 1378 1000 1365 1015 1350 1012 1325 985 1305 970 1300 960 1312 962 1335 930 1350 880 1352 800 1345 700 1345 690 1350 700 1364 620 1364 520 1360 450 1362 380 1360 330 1368 300 1370 305 1382 275 1385 290 1375 250 1382 200 1385 240 1392 225 1400 290 1408 270 1412 240 1412 245 1425 200 1435 150 1436 65 1430 130 1440 220 1447 8 1441V1500H1503"/>
<path d="M1070 1412L1100 1395 1130 1387 1160 1392 1165 1404 1120 1408ZM965 1302L985 1282 1020 1270 1062 1264 1020 1278 995 1290ZM890 1328L930 1315 955 1335 925 1340ZM665 1338L720 1340 700 1346ZM150 1398L190 1400 170 1405ZM1000 1265L1040 1254 1010 1268ZM880 1380L960 1398 1025 1408 1010 1412 950 1402 890 1388ZM560 478L575 490 600 520 607 538 580 515 562 492ZM410 275L422 292 430 295 418 280Z"/>
</g>
<g class="isl" transform="translate(410 330) scale(.33333)">
<path class="near" d="M25 301L90 295 150 275 190 264M370 234L395 242 430 272 465 305 498 328M400 262L425 295M905 1065L898 1110 893 1150 905 1185 950 1200M903 1100L905 1150 930 1185 975 1193M1080 120L1078 170 1110 205 1160 232M1350 75L1345 110 1320 130M700 160L760 195M800 185L870 195M800 122L900 124 960 158 1000 180M870 515L890 535 925 555M1000 582L1015 605 1010 630M990 240L1050 285M385 155L480 150M420 155L560 160M720 60L900 45M745 85L860 75M500 92L610 78"/>
<path class="far" d="M185 549L210 555 225 573M350 800L365 822M255 875L300 858 350 875 385 890M250 880L310 870M15 870L30 910M50 905L70 880M78 850L105 855M60 775L90 755M750 735L775 742M1375 497L1410 492M1315 592L1335 605M1265 403L1315 420M1290 1205L1303 1225M390 915L480 940M165 685L205 720M560 575L600 575M1380 460L1385 465M30 980H35M45 1103H50M607 961H612M315 965H318M845 1018H868M1465 210L1470 218M75 228H82M98 255L104 262M20 137H40M110 800L230 770M190 900L205 915M1455 138H1460M1138 1242H1155M765 1310H768M940 630L1000 640M460 1354H600M210 1386L300 1378M130 1418H190M890 1325L950 1320M970 1300L1040 1270M1345 1354H1355"/>
</g>
<g class="land" transform="translate(850 330) scale(.38266 .33333)">
<path d="M113 372L120 368 165 372 172 368 168 348 145 332 148 324 165 328 180 322 195 318 205 303 215 292 230 285 243 280 238 262 245 255 262 252 268 258 258 268 262 276 300 282 325 275 335 270 333 255 348 258 350 248 345 240 365 237 402 233 398 229 350 234 335 225 333 212 345 200 362 188 350 184 330 192 322 202 308 210 305 225 320 232 305 245 302 262 285 272 272 268 262 246 255 238 235 248 222 242 215 215 240 205 258 190 275 172 300 155 330 147 360 142 385 140 400 150 440 155 475 165 480 178 455 182 430 177 438 192 470 195 475 185 498 178 502 165 525 175 535 162 560 166 610 158 650 155 672 160 668 140 670 128 690 120 705 126 712 145 705 165 692 178 712 175 722 160 712 130 745 125 750 132 785 135 775 122 810 112 840 105 900 100 940 88 1005 98 1005 112 950 124 1010 116 1040 120 1070 122 1110 120 1120 135 1140 138 1200 130 1250 132 1330 142 1350 150 1420 154 1460 150 1503 155V188L1475 192 1490 210 1440 222 1420 230 1385 228 1375 240 1370 252 1355 275 1340 290 1320 307 1315 285 1318 258 1345 240 1370 218 1380 208 1355 224 1335 218 1330 232 1310 240 1280 238 1225 236 1195 258 1168 274 1190 280 1210 288 1208 320 1200 345 1180 375 1160 388 1150 392 1120 402 1112 412 1120 428 1122 442 1105 445 1100 425 1092 408 1090 395 1072 400 1065 410 1045 408 1048 415 1065 425 1052 432 1060 455 1068 475 1065 500 1050 522 1025 538 995 548 985 555 970 550 952 558 945 570 965 590 975 615 975 640 950 660 945 650 920 625 905 608 900 625 905 648 920 668 935 690 940 735 925 720 910 700 905 665 895 640 893 610 885 595 872 602 865 575 850 550 820 552 800 578 770 605 765 640 745 665 735 655 720 615 712 585 708 555 690 562 680 550 690 545 660 522 620 525 590 522 575 528 560 515 548 505 535 483 530 490 545 515 555 528 575 530 588 515 595 530 615 548 600 580 565 600 510 625 497 628 490 605 465 565 440 515 432 498 428 490 435 478 440 450 440 430 412 430 385 428 375 410 378 398 355 395 345 402 350 410 370 415 350 425 358 440 340 425 328 405 312 388 280 360 268 352 278 378 302 402 290 422 285 412 262 398 245 378 232 372 210 375 200 375 183 397 175 405 175 418 155 430 138 433 130 428 115 426 113 400Z"/>
<path d="M140 435L155 442 180 432 215 425 250 423 258 440 255 452 275 460 300 472 322 480 325 462 350 465 375 472 415 472 430 475 432 488 415 485 425 510 445 550 455 575 480 610 495 632 500 642 550 635 553 650 540 680 510 710 480 745 468 770 470 800 477 830 475 865 455 880 432 900 438 920 437 940 420 950 415 975 395 1005 375 1018 320 1025 312 1010 295 960 285 915 265 880 268 850 278 820 268 780 250 750 243 740 250 715 240 692 218 696 200 680 165 690 125 697 95 672 75 645 57 635 60 615 55 590 60 560 55 550 72 515 105 490 110 470 140 450Z"/>
<path d="M498 890L515 870 530 862 540 835 547 855 540 890 525 942 510 948 498 940 495 915ZM1010 915L1035 903 1065 895 1072 880 1095 855 1115 860 1128 850 1138 832 1170 836 1178 846 1170 860 1200 882 1210 870 1215 820 1228 852 1240 885 1265 910 1295 945 1300 975 1290 1010 1275 1040 1275 1050 1250 1060 1225 1055 1203 1050 1190 1018 1180 1032 1170 1025 1155 1000 1130 998 1080 1010 1050 1022 1025 1028 1018 1015 1020 1000 1005 945ZM1235 1072L1262 1070 1258 1098 1248 1100 1238 1085ZM1440 1025L1455 1040 1465 1052 1482 1052 1465 1082 1450 1070 1458 1060ZM1445 1075L1440 1095 1415 1125 1395 1120 1420 1100ZM1138 740L1160 742 1175 760 1195 750 1240 765 1262 800 1282 822 1255 815 1235 798 1215 812 1190 800 1160 765 1140 755ZM975 725L1000 718 1030 680 1045 690 1038 720 1040 740 1025 768 990 760 978 745ZM872 685L900 705 940 745 952 762 950 782 930 775 905 735 880 700ZM950 785L985 790 1010 800 1035 808 985 805ZM1060 735L1100 728 1080 735 1062 745 1075 760 1072 780 1060 765 1055 785 1050 760ZM1058 580L1070 580 1070 605 1080 625 1062 618 1055 600ZM1080 660L1100 655 1102 680 1088 685 1075 670ZM1070 630L1090 630 1095 650 1078 650ZM760 655L775 665 775 682 763 685ZM972 572L985 565 988 572 978 580ZM1058 535L1065 525 1068 535 1060 550ZM1205 395L1215 388 1215 410 1200 435 1185 440 1150 450 1160 440 1185 430ZM1140 450L1155 455 1150 465ZM1205 365L1230 355 1245 368 1220 375 1208 382ZM1215 280L1225 300 1232 345 1218 350ZM105 300L105 285 115 275 135 280 130 295ZM140 270L130 255 140 240 165 238 160 250 178 270 190 295 185 308 145 312 160 302 148 292 160 285 155 270ZM240 372L248 375 248 405 238 405ZM262 412L285 415 300 425 285 422ZM255 68L310 68 330 78 300 92 285 82ZM325 62L375 65 340 70ZM555 132L570 115 600 100 680 92 640 102 600 115 600 130 570 145ZM840 62L870 55 905 65 900 75 860 72ZM905 75L945 80 925 85ZM1180 100L1235 98 1210 108ZM560 60L610 52 655 55 610 62ZM510 58L550 60 530 63ZM1245 102L1280 105Z"/>
<path d="M155 1328L200 1326 300 1322 360 1328 420 1315 430 1322 465 1318 490 1308 530 1302 560 1288 590 1288 605 1295 640 1302 688 1304 685 1325 668 1346 690 1335 705 1322 740 1318 755 1308 800 1296 850 1292 920 1290 960 1296 1005 1286 1040 1298 1100 1292 1180 1290 1240 1298 1300 1312 1340 1312 1370 1325 1425 1335 1410 1345 1380 1350 1365 1360 1370 1378 1412 1385 1395 1390 1352 1398 1350 1415 1400 1430 1503 1441V1500H152"/>
<path class="sea" d="M382 380L390 360 402 350 415 348 422 362 440 358 450 368 480 380 482 388 465 390 435 380 410 386 390 388ZM430 352L445 345 462 338 456 352 440 356ZM522 352L545 342 565 352 555 362 548 378 560 395 572 402 572 422 555 428 538 418 538 400 522 370Z"/>
</g>
<g class="isl" transform="translate(850 330) scale(.38266 .33333)">
<path class="near" d="M1372 235L1350 280M1330 300L1300 332 1255 360M1130 475L1110 510 1085 530M880 700L910 755 930 775M950 790L1035 805 1080 815 1110 800M1055 735L1100 730M1085 630L1100 660 1090 685M1060 630L1030 675M1115 710L1120 770M1070 770L1135 765M1285 765L1320 785 1360 820M1250 785L1290 770M1395 830L1400 880 1412 905M1375 900L1400 920M215 215L250 195 300 158 390 140M350 395L370 435M340 420L355 440M857 600L855 640M1165 762L1210 808M1200 132L1330 140M840 108L940 95M720 130L800 125M1480 880L1492 890M1180 1025L1190 1030"/>
<path class="far" d="M710 640L718 690 712 740M1240 560L1242 610 1215 640M1440 690L1450 740 1468 755M1160 680L1120 710M1380 675L1430 680M1385 270L1410 280M1440 290L1492 302M45 498L80 492M55 460H60M0 600L12 608M495 830L515 842M583 770H590M582 910L600 905M640 900H645M452 1127H457M545 1120L558 1124M680 1145L692 1148M715 1180H718M1338 1192H1342M1390 1160H1394M705 796H708M125 210L132 218M560 630H575M225 735L245 700M185 405H205M135 322L150 328M740 68H755M115 138H122M90 1045H92M106 1073H108M745 1052H747M1365 1292L1382 1298M845 1288H935M180 1326L350 1322M1480 1150H1484M1215 530V540M1470 800L1490 830M885 835H888M1100 1290H1200"/>
</g>
</g>
<g class="line" transform="translate(410 330) scale(.33333)">
<path d="M343 150V228M497 323H733L760 330 790 330 815 345 835 360 837 372 830 385 860 375 885 368 905 355 950 338M900 358L940 355 960 340M545 462L580 471 630 468 655 490 670 485 690 502 708 518M755 600L757 588 775 587 780 600 768 612M783 602L770 615M795 620L826 605M850 662L845 655M925 635L912 655 920 675 955 685 960 720 975 727 990 722 985 700 1015 700 1020 690M955 685L957 710 940 725 940 765M862 728L890 732 895 745 878 770 862 775 850 768M890 732L915 752 940 756 938 770 915 772 908 798 922 818 945 826 975 818 985 838 1020 850 1025 870 1042 888 1040 900 1018 897 1003 905 1000 920 960 922M947 828L945 860 948 880 938 888M1040 900L1045 918 1070 935 1075 958 1050 965 1035 960 1038 945 1000 920M1075 958L1048 985 1078 1000 1080 1018M1048 985L1036 1022M948 880L950 905 962 925 950 960 940 1000 940 1030 930 1055 928 1100 918 1140 925 1160 955 1170M1040 685L1038 705 1048 718 1070 713 1085 715 1095 700M1073 690L1068 700 1073 713M1105 735L1095 748 1118 752"/>
</g>
<g class="line" transform="translate(850 330) scale(.38266 .33333)">
<path d="M105 490H118V502M140 470L165 468 170 440M118 502L80 508M118 510L210 575V605L170 610 150 640 130 640M132 525L138 605 90 607 60 600M118 505L132 525 210 575 265 540 245 510 248 465 240 425M265 540L290 545 360 568 362 470M362 550H445M360 568L355 595 340 635 285 670 290 700M290 545L295 590 280 630 245 700M280 630H205L200 680M210 605L200 620M185 640V690M165 640L160 688M120 655V695M130 640L95 648M150 640L175 642 200 630M60 620H90M455 575L445 610 425 650 435 695 480 700 540 672 497 650M445 610L490 625M425 655L355 655 385 690 435 695M355 655L340 635M285 670L300 702 345 690 385 690M300 702L315 698 310 740 275 775M250 718L285 715 288 740 265 770M385 690L405 700 400 740 395 775 405 800 385 812 375 835 340 828 338 795 305 800 300 785 270 785M400 740L445 745 468 768M400 745L430 740 435 700M480 700V745M405 800L430 815 435 830 475 822M435 830L440 870 430 875 425 840 385 845 345 835 338 875 360 885 390 870 415 880 420 895 410 920 395 920M265 880L300 882 360 885M330 885L325 970 305 975M325 955L345 955 360 945 395 920 410 925 415 965M378 985L388 975 395 982 384 992ZM405 950L413 955 410 963M165 370L170 373M118 385L128 385 125 425M172 368L210 378M195 318L215 325 235 335 230 350 240 360M215 292L225 320M235 345L290 340M280 282L285 305 270 315 290 325 320 330 350 325 355 280 335 272M225 320L255 318M355 300L410 300 405 285 380 270 382 240M335 262L380 262M290 330L275 350M320 330L310 350 290 350 300 365 330 370M310 350L330 355 345 335 375 335 390 345M330 355L325 385M345 365L380 365M350 385L375 385M290 345L315 355M410 300L420 312 470 325 460 335M400 235L410 205 395 190 402 170 390 150M345 192L340 160 315 160 270 190 265 235M510 395L525 375 480 370M440 430L500 428 515 415 510 395 490 390M445 450L470 432M435 478L460 470 480 440M500 428L510 460 530 485M460 470L500 485 525 490M500 590L550 578 585 560 580 545M550 580L565 600M440 480L445 470M520 340L525 315 560 308 620 305 625 290 690 272 740 290 765 300 800 318 820 320M820 320L830 332 800 345 765 380 700 390 695 378 670 380 640 368 610 355 585 355 588 385 572 395M588 385L625 385 665 420 680 425M570 420L600 415 625 430 630 490 640 522M625 430L685 420 725 420M685 420L690 400 735 400 765 380M630 490L670 488 700 460 715 425M715 425L730 440 755 465 765 480M680 545L690 520 715 480 730 460M765 480L795 495 828 500 825 512 770 495 765 480M828 500L850 498M820 320L870 318 900 300 920 310 980 320 1025 320 1055 318 1060 290 1090 290 1120 310 1160 330 1140 365 1120 385M820 320L860 350 900 378 945 382 1000 375 1025 355 1050 345 1025 328M890 505L900 515 890 545 910 560 935 545 952 550M825 515L845 520 850 550M825 515L828 545M850 545L870 510 890 500M895 580L910 560 918 580 945 585 950 610M918 580L930 610 950 615 955 640M893 600L918 580M1100 410L1118 412M1208 755V808M980 718L1010 722 1040 690M560 600L500 590M710 425L700 400M640 315L635 305"/>
</g>
<g transform="translate(410 330) scale(.33333)" fill="url(#hatchA)"><path d="M1383 556L1412 503H1453V516H1427V535L1415 557ZM1012 685L1020 665 1034 675 1036 700 1046 712V720L1030 723 1022 698ZM935 890L945 885 962 933 935 934Z"/><path fill="#df5a6c" d="M781 597L788 588 785 602ZM1012 1167L1022 1163 1040 1166 1025 1172ZM1208 1186L1218 1187 1224 1193ZM1070 712L1074 710V716Z"/></g>
<g transform="translate(850 330) scale(.38266 .33333)" fill="url(#hatchA)"><path d="M490 642L510 643 537 642 536 655 528 668 510 662 495 655ZM710 428L728 425 740 436 764 435 756 445 760 460 745 457 735 463 720 458 718 440ZM848 508L862 493 885 488 890 500 875 498 855 510ZM453 335L458 328 470 328 460 338ZM418 352L428 348 440 355 428 362Z"/><path fill="#df5a6c" d="M516 398L522 400 520 406 516 404ZM639 346H645V353H640ZM383 650H390V657H384ZM420 440L428 437 425 442ZM475 371L486 374 480 376ZM497 377H503V381H498ZM434 465H438V470H434ZM388 333L396 342 394 345ZM1254 356L1262 354 1256 359ZM433 692H440V696H433Z"/></g>
</svg>
</section>

<section class="side">
  <div class="split"></div>
  <div class="dock">
    <div class="dockhead"><span>Layer Styling</span><svg><use href="#float"/></svg><svg><use href="#close"/></svg></div>
    <div class="combo lay"><svg width="16" height="12" viewBox="0 0 16 12"><path d="M1 2C4-.5 6 4 9 3S15 0 15.500 3 13 7 15 9 10 8 8 8 3 12 1.500 10 2 6 1 2Z" fill="#e2e2e2" stroke="#888"/></svg><span>ne_10m_admin_0_disputed_areas</span><svg class="c"><use href="#caret"/></svg></div>
    <div class="body">
      <div class="tabs"><div class="sel"><svg width="16" height="16"><use href="#brush2"/></svg></div>
        <svg class="t" viewBox="0 0 16 16"><use href="#lab"/></svg>
        <svg class="t" viewBox="0 0 16 16"><rect y="4" width="16" height="8" rx="4" fill="#dfe6f2"/><text x="1.200" y="10.500" font-size="7.500" font-weight="700" fill="#333">abc</text></svg>
        <svg class="t" viewBox="0 0 16 16"><path d="M8 0L14.500 4 8 8 1.500 4Z" fill="#ef6b67"/><path d="M1.500 4L8 8V16L1.500 11.500Z" fill="#7ccb2e"/><path d="M14.500 4L8 8V16L14.500 11.500Z" fill="#f1d93b"/></svg>
        <svg class="t" viewBox="0 0 16 16"><rect x="5" y="1" width="6" height="6" fill="#e25d52"/><path d="M4 7H12M4 7V11M12 7V11M8 7V10" stroke="#c78a2e" stroke-width="2"/><rect x="0" y="11" width="7" height="5" fill="#f3d648"/><rect x="9" y="11" width="7" height="5" fill="#7da7d9"/></svg>
        <svg class="t" viewBox="0 0 16 16"><path d="M3 8C0 4 4 2 8 4.500M6.500 1.500L9.500 5 5 7" fill="none" stroke="#55a37b" stroke-width="1.800"/><path d="M7 10C9 8 11 10 13 10M8.500 7.500L6.500 10.500 9.500 13" fill="none" stroke="#e07a3c" stroke-width="1.600"/><circle cx="11.500" cy="12" r="2.200" fill="none" stroke="#e07a3c" stroke-width="1.600"/></svg>
      </div>
      <div class="props">
        <div class="combo"><svg width="14" height="14" viewBox="0 0 14 14"><path d="M1 .8H11V3.800H1ZM3 5.500H13V8.500H3ZM1 10.300H11V13.300H1Z" fill="#18b25f" stroke="#124d2b"/></svg><span>Single symbol</span><svg class="c"><use href="#caret"/></svg></div>
        <div class="symrow">
          <div class="prev"><svg width="61" height="61"><rect width="61" height="61" fill="url(#hatch)"/></svg></div>
          <div class="stree">
            <div class="l0"><svg class="c"><use href="#caret"/></svg><svg width="16" height="16"><rect width="16" height="16" fill="url(#hatch)"/></svg><b>Fill</b></div>
            <div class="l1"><svg class="c"><use href="#caret"/></svg><svg width="16" height="16"><rect width="16" height="16" fill="url(#hatch)"/></svg><span>Line pattern fill</span></div>
            <div class="l2"><svg class="c"><use href="#caret"/></svg><i class="ln"></i><b>Line</b></div>
            <div class="l3 cur"><i class="ln dk"></i><span>Simple line</span></div>
          </div>
          <div class="sbtns">
            <div class="btn"><svg viewBox="0 0 16 16"><path d="M5.500 1.500H9.500V5.500H14V9.500H9.500V14H5.500V9.500H1.500V5.500H5.500Z" fill="#fff" stroke="#3e8a4e" stroke-width="1.300"/><path d="M7.500 3V12.500M3 7.500H12.500" stroke="#3e8a4e"/></svg></div>
            <div class="btn dis"><svg viewBox="0 0 16 16"><path d="M1 13L8 2 15 13Z" fill="#b8b8b8" stroke="#888"/></svg></div>
            <div class="btn dis"><svg viewBox="0 0 16 16"><path d="M1 5.500H15V10.500H1Z" fill="#eee" stroke="#b99"/><path d="M3.500 8H12.500" stroke="#a99" stroke-width="1.300"/></svg></div>
            <div class="btn dis"><svg viewBox="0 0 16 16"><path d="M1 3L8 14 15 3Z" fill="#b8b8b8" stroke="#888"/></svg></div>
            <div class="btn"><svg viewBox="0 0 16 16"><path d="M1.500 3V14H12" fill="#bbb" stroke="#666"/><rect x="3.500" y="1.500" width="10" height="10.500" fill="#ddd" stroke="#666"/><rect x="10" y="9.500" width="5" height="5" fill="#f6e36b" stroke="#c4a51c"/></svg></div>
            <div class="btn"><svg viewBox="0 0 16 16"><path d="M5 3.500C6-.5 12-.5 12 4V8" fill="none" stroke="#aaa" stroke-width="2"/><rect x="2" y="7" width="12" height="8" rx="1" fill="#f2dc1f" stroke="#bfa313"/></svg></div>
          </div>
        </div>
        <hr>
        <div class="slt"><span>Symbol layer type</span><div class="combo"><span>Simple line</span><svg class="c"><use href="#caret"/></svg></div></div>
        <div class="form">
          <div><label>Color</label><div class="cbtn"><i></i></div><div class="cdrop"><svg class="c"><use href="#caret"/></svg></div><svg class="dd"><use href="#dd"/></svg></div>
          <div><label>Stroke width</label><div class="spin"><span>0.260000</span><svg width="13" height="10" viewBox="0 0 13 10"><path d="M4 0H13V10H4L0 5Z" fill="#9a9a9a"/><path d="M5.500 2.500L10.500 7.500M10.500 2.500L5.500 7.500" stroke="#fff"/></svg><i class="ud"></i></div><div class="combo u"><span>Millimeters</span><svg class="c"><use href="#caret"/></svg></div><svg class="dd"><use href="#dd"/></svg></div>
          <div><label>Offset</label><div class="spin"><span>0.000000</span><i class="ud"></i></div><div class="combo u"><span>Millimeters</span><svg class="c"><use href="#caret"/></svg></div><svg class="dd"><use href="#dd"/></svg></div>
          <div><label>Stroke style</label><div class="combo w"><i class="solid"></i><span>Solid Line</span><svg class="c"><use href="#caret"/></svg></div><svg class="dd"><use href="#dd"/></svg></div>
          <div><label>Join style</label><div class="combo w"><svg class="ic" viewBox="0 0 16 16"><path d="M0 1.500H9L14 6V15H5V10H0Z" fill="#6389bd"/><path d="M0 1.500H9L14 6V15M0 10H5V15" fill="none" stroke="#111" stroke-width="1.300"/><path d="M0 6H10V15" fill="none" stroke="#e4d432" stroke-width="1.600" stroke-dasharray="2 2"/></svg><span>Bevel</span><svg class="c"><use href="#caret"/></svg></div><svg class="dd"><use href="#dd"/></svg></div>
          <div><label>Cap style</label><div class="combo w"><svg class="ic" viewBox="0 0 16 16"><path d="M0 3.500H14.500V12.500H0" fill="#6389bd" stroke="#111" stroke-width="1.300"/><path d="M1 8H11" stroke="#e4d432" stroke-width="1.600" stroke-dasharray="2 2"/></svg><span>Square</span><svg class="c"><use href="#caret"/></svg></div><svg class="dd"><use href="#dd"/></svg></div>
          <div class="chk"><i class="cb"></i><span class="cl">Use custom dash pattern</span></div>
          <div><div class="dash"><i></i><i></i><i></i><i></i><i></i><i></i><i></i><i></i></div><div class="combo u"><span>Millimeters</span><svg class="c"><use href="#caret"/></svg></div><svg class="dd"><use href="#dd"/></svg></div>
          <div class="chk"><i class="cb"></i><span class="cl">Draw line only inside polygon</span></div>
          <div><label>Rings</label><div class="combo r"><svg class="ic" viewBox="0 0 16 16"><path d="M2 11C0 6 5 1 10 1.500S16 6 14.500 9 8 14 5 13.500 2.500 12.500 2 11Z" fill="#7fa3cc" stroke="#222"/><ellipse cx="9" cy="7" rx="3.600" ry="3" fill="#fff" stroke="#222"/></svg><span>All Rings</span><svg class="c"><use href="#caret"/></svg></div></div>
        </div>
        <div class="enable"><i class="cb ck"></i><span class="e1">Enable symbol layer</span><svg class="dd"><use href="#dd"/></svg><i class="cb"></i><span class="e2">Draw effects</span><div class="btn dis sq"><svg viewBox="0 0 16 16"><path d="M7 0L9 5H14L10.500 8.500 12 14 7 11 2.500 14 4 8.500 0 5H5Z" fill="#b5a98c"/></svg></div></div>
        <div class="rend"><i></i><b>Layer Rendering</b></div>
        <div class="foot"><div class="btn sq or"><svg><use href="#undo"/></svg></div><div class="btn sq gr"><svg><use href="#redo"/></svg></div><i class="cb ck"></i><span>Live update</span><div class="btn apply"><svg viewBox="0 0 16 16"><path d="M1 9L4 7.500 6.500 11 12.500.5 15.500 1 7.500 15.500H5.500Z" fill="#7ed03a" stroke="#3e8a1c" stroke-width=".7"/></svg><span>Apply</span></div></div>
      </div>
    </div>
    <div class="dtabs"><span class="q">Search QMS</span><span class="y">Layer Styling</span><span class="p">Processing Toolbox</span></div>
  </div>
</section>
</main>

<footer class="status">
  <div class="find"><svg viewBox="0 0 14 14"><circle cx="5.500" cy="5.500" r="4.300" fill="none" stroke="#888" stroke-width="1.200"/><path d="M8.500 8.500L13 13" stroke="#888" stroke-width="1.500"/></svg><span>Type to locate (Ctrl+K)</span></div>
  <span class="k1">Coordinate</span><div class="f co">-175.2,151.7</div>
  <svg class="mouse" viewBox="0 0 16 16"><path d="M1 2L5 0 9 4 14 11 12 15 8 15 4 9Z" fill="#888" stroke="#222"/><path d="M2 5L7 1M4 9L9 4M6 11L12 6M12 3L16 0" stroke="#222" stroke-width="1.300"/><circle cx="11" cy="12.500" r="2.300" fill="#fff" stroke="#333"/></svg>
  <span class="k2">Scale</span><div class="f sc"><span>1:143878416</span><i><svg class="c"><use href="#caret"/></svg></i></div>
  <svg class="lock" viewBox="0 0 12 16"><path d="M2.500 8V5A3.500 3.500 0 0 1 9.500 5V8" fill="none" stroke="#888" stroke-width="1.600"/><rect y="7" width="12" height="8.500" rx="1.500" fill="#5c5c5c"/></svg>
  <span class="k3">Magnifier</span><div class="f spin2"><span>100%</span><i class="ud"></i></div>
  <span class="k4">Rotation</span><div class="f spin2 ro"><span>0.0 °</span><i class="ud"></i></div>
  <i class="cb ck"></i><span class="k5">Render</span>
  <svg class="gl" viewBox="0 0 15 14"><circle cx="7.500" cy="7" r="6" fill="#bbb" stroke="#666"/><path d="M7.500 1V13M0 7H15M2 4H13M2 10H13M5 1.500C3 5 3 9 5 12.500M10 1.500C12 5 12 9 10 12.500" fill="none" stroke="#555" stroke-width=".9"/></svg><span class="k6">EPSG:4326</span>
  <svg class="bub" viewBox="0 0 16 15"><path d="M8 0C17 0 18 9 14 11L15 15 10 12C-1 13-3 0 8 0Z" fill="#606060"/><circle cx="4.500" cy="6" r="1.200" fill="#fff"/><circle cx="8" cy="6" r="1.200" fill="#fff"/><circle cx="11.500" cy="6" r="1.200" fill="#fff"/></svg>
  <svg class="puz" viewBox="0 0 24 20"><path d="M1 6H6C4 0 11 0 9 6H14V10C12 9 10 11 14 13V19H10C12 14 4 14 6 19H1V14C6 15 6 9 1 10Z" fill="#999" stroke="#555"/><path d="M11 11C14 16 22 13 22 7 22 3 18 3 17 5 20 5 20 9 17 9 15 9 15 7 13 7" fill="#fff" stroke="#777"/></svg>
</footer>

<div class="frame"></div>
<svg class="arrow" viewBox="0 0 22 61"><path d="M11 0L22 30H14V61H8V30H0Z" fill="#f00"/></svg>
<div class="note">toolbars</div>
</body>
</html>
```
FILE: styles.css
```css
*{box-sizing:border-box}
html,body{height:100%}
body{margin:0;width:1920px;height:1058px;overflow:hidden;position:relative;display:flex;flex-direction:column;background:#eee;color:#111;font:12px/16px "Noto Sans",sans-serif}
svg{display:block;flex:none}
i{font-style:normal;display:block;flex:none}
span{white-space:nowrap}
.defs{position:absolute;width:0;height:0}
.desk{height:3px;flex:none;background:#222}
.title{height:24px;flex:none;background:#c6c6c6;display:flex;align-items:center;justify-content:space-between}
.logo{width:22px;height:22px}
.name{width:163px;margin:0 8px 2px 0;font-weight:600;font-size:12.300px;color:#3a3a3a;display:flex;justify-content:center}
.winbtns{width:60px;height:14px;margin:0 0 2px 0}
.menu{height:21px;flex:none;display:flex;align-items:center;padding:0 0 0 3.600px}
.menu span{padding:0 7.350px}
.bar{height:31px;flex:none;display:flex;align-items:center;background:linear-gradient(#fafafa,#ececec);border-bottom:1px solid #b4b4b4}
.bar.top{height:32px;border-top:1px solid #d0d0d0}
.bar.last{height:30px}
.i{width:16px;height:16px;margin:0 4px 0 5px}
.i.on{width:24px;height:24px;margin:0 0 0 1px;padding:3px;border:1px solid #a9a9a9;border-radius:2px;background:#dadada}
.off{opacity:.33;color:#777}
.a{width:8px;height:5px;margin:0 2px}
.h{width:4px;height:16px;margin:0 4px 0 8px;background:radial-gradient(circle,#aaa .7px,transparent .9px) 0 0/3px 3px}
.h.first{margin:0 4px}
.s{width:1px;height:12px;margin:0 2px 0 3px;background:#ccc}
.ext{width:9px;height:7px;margin:0 3px 0 5px}
.ext path{fill:none;stroke:#444;stroke-width:1.100}
.ext.wide{margin:0 2px 0 13px}
.s+.h{margin-left:9px}
.work{flex:1;display:flex;min-height:0}
.layers{width:382px;display:flex;flex-direction:column;margin-right:6px}
.dockhead{height:21px;display:flex;align-items:center;padding:0 2px 0 4px;flex:none}
.dockhead span{flex:1}
.dockhead svg{width:12px;height:12px;margin-left:2px}
.ltools{height:30px;display:flex;align-items:center;padding:0 0 2px 3px;flex:none}
.ltree{flex:1;border:1px solid #b4b4b4;background:#fff;margin-bottom:-1px}
.lrow{height:19px;display:flex;align-items:center;padding-left:22px;font-weight:700}
.lrow .sw{width:16px;height:16px;margin:0 6px 0 7px;background:#d6d6d6}
.lrow .sw.hat{background:repeating-linear-gradient(135deg,#5a6fa8 0 1px,#6a6595 1px 2.120px)}
.lrow.cur{background:#308cc6;color:#fff}
.lrow.cur span{text-decoration:underline;text-underline-offset:3px;text-decoration-thickness:1px}
.cb{width:14px;height:14px;border:1px solid #b0b0b0;background:#fff}
.cb.ck{position:relative}
.cb.ck::after{content:"";position:absolute;left:4px;top:0;width:3.500px;height:8px;border:solid #111;border-width:0 2px 2px 0;transform:rotate(38deg)}
.canvas{width:1058px;margin-bottom:-1px;background:#fff;border:1px solid #b4b4b4;border-top:0;flex:none;overflow:hidden}
.map{width:1057px;height:884px;margin-top:1px}
.land path{fill:#d6d6d6;stroke:#bababa;stroke-width:.8;vector-effect:non-scaling-stroke;stroke-linejoin:round}
.land path.sea{fill:#fff}
.line path{fill:none;stroke:#bcbcbc;stroke-width:.8;vector-effect:non-scaling-stroke}
.isl path{fill:none;stroke:#b0b0b0;stroke-width:3.500}
.isl .near{stroke-dasharray:7 5 3 8 12 4 2 6}
.isl .far{stroke-dasharray:3 12 5 7 2 16 4 9}
.side{flex:1;display:flex;min-width:0}
.split{width:6px;flex:none;height:16px;align-self:center;background:radial-gradient(circle,#aaa .7px,transparent .9px) 2px 0/3px 3px repeat-y}
.dock{flex:1;display:flex;flex-direction:column;min-width:0}
.dock .dockhead{height:23px;padding-bottom:1px}
.combo,.btn,.cbtn,.cdrop,.dash{border:1px solid #a8a8a8;border-radius:3px;background:linear-gradient(#fefefe,#ededed)}
.combo{height:25px;display:flex;align-items:center;padding:0 7px 1px 4px}
.combo>span{flex:1}
.c{width:8px;height:5px}
.combo.lay{margin:0 3px;padding:0 7px 0 5px;flex:none}
.combo.lay>svg:first-child{margin-right:3px}
.body{flex:1;display:flex;margin:0 3px 4px;min-height:0}
.tabs{width:38px;background:#5e5e5e;flex:none}
.tabs .sel{height:30px;background:#eee;padding:11px 0 0 6px}
.tabs .t{width:16px;height:16px;margin:5px 0 7px 3px}
.tabs .t+.t{margin-top:0;margin-bottom:8px}
.props{flex:1;padding:6px 0 0 3px;display:flex;flex-direction:column;min-width:0}
.props>*{flex:none}
.props>.combo{padding-left:7px}
.props>.combo>svg:first-child{margin-right:3px}
.symrow{display:flex;height:141px;align-items:flex-start;padding-top:6px}
.prev{width:106px;padding:35px 0 0 20px}
.stree{width:247px;height:119px;margin-top:5px;background:#fff;border:1px solid #b0b0b0}
.stree>div{height:19px;display:flex;align-items:center}
.stree .c{margin-right:9px}
.stree svg+b,.stree svg+span,.stree i+b,.stree i+span{margin-left:6px}
.l0{padding-left:6px}.l1{padding-left:26px}.l2{padding-left:46px}.l3{padding-left:83px}
.ln{width:16px;height:2px;background:#f08c98}
.ln.dk{background:#78669a}
.cur{background:#308cc6;color:#fff}
.sbtns{display:grid;grid-template-columns:28px 28px;gap:4px 6px;margin-left:6px}
.btn{height:24px;display:flex;align-items:center;justify-content:center}
.btn svg{width:16px;height:16px}
.btn.dis{border-color:#c6c6c6;background:#f1f1f1}
.btn.dis svg{opacity:.5}
hr{width:421px;margin:0 0 9px;border:0;border-top:1px solid #9f9f9f;border-bottom:1px solid #fafafa}
.slt{display:flex;align-items:center;height:25px;padding-left:1px}
.slt>span{width:101px}
.slt .combo{width:309px}
.form{margin-top:10px;padding-left:10px;display:grid;grid-template-rows:33px 32px 32px 32px 32px 31px 30px 31px 30px 31px}
.form>div{display:flex;align-items:center}
.form>.chk{position:relative;top:1px}
.form label{width:83px;padding-top:1px;white-space:nowrap}
.cbtn{width:261px;height:28px;padding:5px 4px}
.cbtn i{height:16px;background:#e8152d;border-radius:2px}
.cdrop{width:12px;height:28px;display:flex;align-items:center;justify-content:center;flex:none}
.dd{width:24px;height:18px;margin-left:9px}
.spin,.f{border:1px solid #a8a8a8;border-radius:3px;background:#fff;display:flex;align-items:center}
.spin{width:151px;height:24px;padding-left:4px;margin-right:6px}
.spin span{flex:1}
.spin svg{margin-right:11px}
.ud{align-self:stretch;width:14px;border-left:1px solid #b8b8b8;background:#f0f0f0;position:relative;border-radius:0 3px 3px 0}
.ud::before,.ud::after{content:"";position:absolute;left:3px;border:3.500px solid transparent}
.ud::before{top:1px;border-bottom:4px solid #555}
.ud::after{bottom:1px;border-top:4px solid #555}
.u{width:116px}.w{width:273px}.r{width:309px}
.solid{width:32px;height:2px;background:#000;margin:0 3px 0 1px}
.ic{width:16px;height:16px;margin:0 3px 0 1px}
.cl{margin-left:5px}
.dash{width:216px;height:25px;margin:0 6px 0 18px;display:flex;align-items:center;justify-content:space-between;padding:0 7px 0 4px;opacity:.8}
.dash i{width:18px;height:1px;background:#999}
.enable{display:flex;align-items:center;height:24px;margin-top:178px;padding-left:0}
.enable .e1{margin-left:6px;width:119px}
.enable .dd{margin:0 39px 0 9px}
.enable .e2{margin-left:5px;width:83px}
.btn.sq{width:24px;height:24px}
.enable .sq svg{width:14px}
.rend{display:flex;align-items:center;height:16px;margin-top:25px;padding-left:5px}
.rend i{border:5.500px solid transparent;border-left:8px solid #333;border-right:0}
.rend b{margin-left:9px}
.foot{display:flex;align-items:center;height:25px;margin-top:6px}
.foot .sq+.sq{margin-left:6px}
.or{color:#e27b3c}.gr{color:#7db585}
.foot .cb{margin-left:190px}
.foot>span{margin-left:5px;width:78px}
.btn.apply{width:80px;height:26px}
.dtabs{height:28px;flex:none;border-top:1px solid #b0b0b0;display:flex;align-items:flex-start;margin-bottom:-1px}
.dtabs span{height:25px;line-height:23px;text-align:center;background:#dcdcdc;border:1px solid #b4b4b4;border-top:0;border-radius:0 0 3px 3px}
.dtabs .q{width:93px}.dtabs .y{width:97px;height:27px;line-height:26px;margin:-1px 0 0 -1px;background:#f5f5f5}.dtabs .p{width:134px;margin-left:-1px}
.status{height:32px;flex:none;display:flex;align-items:center;font-size:9px;padding-top:1px}
.find{width:221px;height:25px;margin-left:4px;border:1px solid #a8a8a8;border-radius:3px;background:#fff;display:flex;align-items:center;font-size:12px;color:#777;padding-left:8px}
.find svg{width:13px;height:13px;margin-right:7px}
.k1{width:50px;margin-left:917px}
.f{height:25px;justify-content:space-between;padding-left:4px}
.co{width:65px;height:22px;padding-left:5px}
.mouse{width:16px;height:16px;margin:0 13px 0 4px}
.k2{width:25px}
.sc{width:88px}
.sc i{width:21px;align-self:stretch;border-left:1px solid #b8b8b8;background:#f4f4f4;display:flex;align-items:center;justify-content:center;border-radius:0 3px 3px 0}
.lock{width:12px;height:16px;margin:0 9px 0 12px}
.k3{width:44px}
.spin2{width:91px;height:24px}
.k4{width:45px;margin-left:9px}
.spin2.ro{width:87px}
.status .cb{margin-left:6px}
.k5{margin-left:5px;width:46px}
.gl{width:15px;height:14px}
.k6{width:66px;margin-left:3px}
.bub{width:16px;height:15px}
.puz{width:24px;height:20px;margin-left:12px}
.frame{position:absolute;left:-3px;top:44px;width:1578px;height:102px;border:6px solid #f00;border-radius:3px}
.arrow{position:absolute;left:733.500px;top:156px;width:22px;height:61px}
.note{position:absolute;left:686px;top:219px;font-size:36.800px;line-height:50px;color:#f00}
text{font-family:"Noto Sans",sans-serif}
```
